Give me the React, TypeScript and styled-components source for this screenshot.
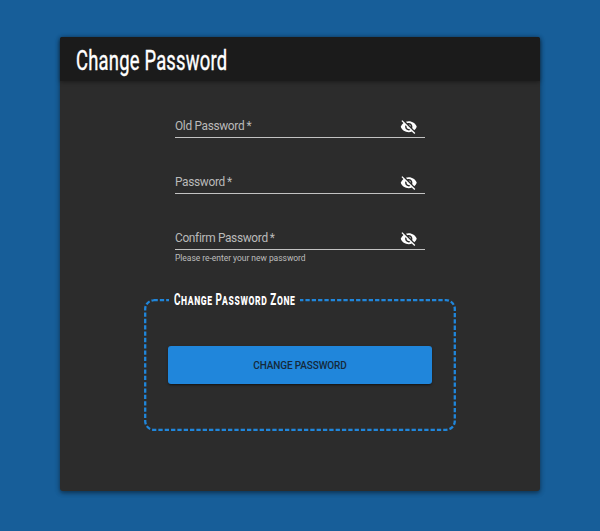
import React from "react";
import styled, { createGlobalStyle } from "styled-components";

const GlobalStyle = createGlobalStyle`
  * { box-sizing: border-box; }
  body { margin: 0; background: #175e99; font-family: Roboto, sans-serif; }
`;

const Page = styled.main`
  height: 531px;
  padding: 37px 60px 0;
  background: #175e99;
`;

const Card = styled.section`
  height: 454px;
  border-radius: 3px;
  background: #2c2c2c;
  box-shadow: 0 2px 4px rgba(0, 0, 0, 0.35), 0 1px 6px rgba(0, 0, 0, 0.2);
`;

const Header = styled.header`
  height: 44px;
  padding-left: 16px;
  border-radius: 2px 2px 0 0;
  background: #1b1b1b;
  box-shadow: 0 1px 4px rgba(0, 0, 0, 0.4);
`;

const Title = styled.h1`
  margin: 0;
  width: max-content;
  font-size: 27px;
  font-weight: 400;
  line-height: 48px;
  letter-spacing: 0.3px;
  color: #fff;
  -webkit-text-stroke: 0.4px #fff;
  transform: scaleX(0.682);
  transform-origin: left;
`;

const Form = styled.form`
  display: flex;
  flex-direction: column;
  padding: 32px 84px 0;
`;

const Field = styled.div`
  height: 56.2px;
  margin: 0 31px 0 31px;
`;

const FieldRow = styled.div`
  display: flex;
  justify-content: space-between;
  height: 25px;
  border-bottom: 1px solid #c2c2c2;
`;

const Label = styled.label`
  font-size: 11.9px;
  line-height: 27px;
  letter-spacing: -0.33px;
  color: #bababa;
  white-space: pre;
`;

const Toggle = styled.button`
  width: 17px;
  height: 17px;
  margin: 5px 8px 0 0;
  padding: 0;
  border: 0;
  background: none;
  color: #fff;
  svg { display: block; width: 17.5px; height: 17.5px; margin-left: -0.4px; }
`;

const Hint = styled.div`
  font-size: 8.5px;
  line-height: 17px;
  letter-spacing: -0.04px;
  color: #bcbcbc;
`;

const Zone = styled.div`
  position: relative;
  height: 132px;
  margin-top: 17.4px;
  padding: 0 24px;
`;

const DashedOutline = styled.svg`
  position: absolute;
  inset: 0;
  width: 312px;
  height: 132px;
`;

const Legend = styled.div`
  position: relative;
  width: 131px;
  height: 20px;
  margin: -9px 0 0 1px;
  padding-left: 5px;
  background: #2c2c2c;
`;

const LegendText = styled.span`
  display: inline-block;
  font-size: 16.6px;
  font-weight: 700;
  font-variant: small-caps;
  line-height: 20px;
  letter-spacing: 1px;
  white-space: nowrap;
  color: #fff;
  transform: scaleX(0.6);
  transform-origin: left;
`;

const Submit = styled.button`
  position: relative;
  display: block;
  width: 264px;
  height: 38px;
  margin-top: 36px;
  padding: 1px 0 0;
  border: 0;
  border-radius: 3px;
  background: #2086db;
  box-shadow: 0 2px 2px -1px rgba(0, 0, 0, 0.4), 0 1px 3px rgba(0, 0, 0, 0.25);
  font: 500 10px Roboto, sans-serif;
  letter-spacing: -0.13px;
  color: #15293a;
`;

const VisibilityOff = () => (
  <svg viewBox="0 0 24 24" fill="currentColor">
    <path d="M12 7c2.76 0 5 2.24 5 5 0 .65-.13 1.26-.36 1.83l2.92 2.92c1.51-1.26 2.7-2.89 3.43-4.75-1.73-4.39-6-7.5-11-7.5-1.4 0-2.74.25-3.98.7l2.16 2.16C10.74 7.13 11.35 7 12 7zM2 4.27l2.28 2.28.46.46C3.08 8.3 1.78 10.02 1 12c1.73 4.39 6 7.5 11 7.5 1.55 0 3.03-.3 4.38-.84l.42.42L19.73 22 21 20.73 3.27 3 2 4.27zM7.53 9.8l1.55 1.55c-.05.21-.08.43-.08.65 0 1.66 1.34 3 3 3 .22 0 .44-.03.65-.08l1.55 1.55c-.67.33-1.41.53-2.2.53-2.76 0-5-2.24-5-5 0-.79.2-1.53.53-2.2zm4.31-.78l3.15 3.15.02-.16c0-1.66-1.34-3-3-3l-.17.01z" />
  </svg>
);

const PasswordField = ({ label, hint }: { label: string; hint?: string }) => (
  <Field>
    <FieldRow>
      <Label>{label}{"\u2009*"}</Label>
      <Toggle type="button" aria-label="Toggle password visibility">
        <VisibilityOff />
      </Toggle>
    </FieldRow>
    {hint && <Hint>{hint}</Hint>}
  </Field>
);

export default function App() {
  return (
    <Page>
      <GlobalStyle />
      <Card>
        <Header>
          <Title>Change Password</Title>
        </Header>
        <Form>
          <PasswordField label="Old Password" />
          <PasswordField label="Password" />
          <PasswordField label="Confirm Password" hint="Please re-enter your new password" />
          <Zone>
            <DashedOutline viewBox="0 0 312 132" fill="none">
              <path
                d="M9 1.2H302A8.8 8.8 0 0 1 310.8 10V122A8.8 8.8 0 0 1 302 130.8H10A8.8 8.8 0 0 1 1.2 122V10A8.8 8.8 0 0 1 10 1.2"
                stroke="#2086db"
                strokeWidth="2.3"
                strokeDasharray="4.3 2.03"
                strokeDashoffset="-0.5"
              />
            </DashedOutline>
            <Legend>
              <LegendText>Change Password Zone</LegendText>
            </Legend>
            <Submit type="button">CHANGE PASSWORD</Submit>
          </Zone>
        </Form>
      </Card>
    </Page>
  );
}
